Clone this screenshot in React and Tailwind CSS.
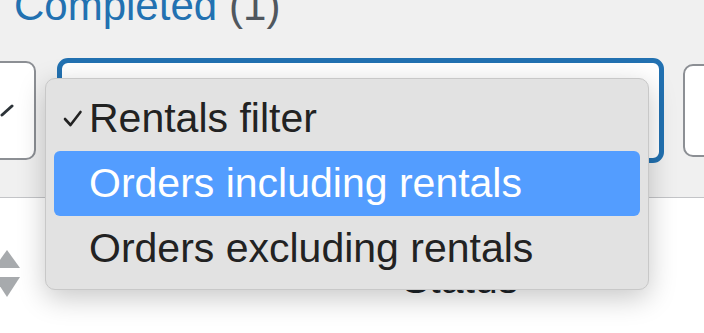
import React from 'react';

const options = [
  { label: 'Rentals filter', checked: true },
  { label: 'Orders including rentals', active: true },
  { label: 'Orders excluding rentals' },
];

function SortArrows() {
  return (
    <svg width="28" height="48" viewBox="0 0 28 48" className="shrink-0">
      <polygon points="13,0 26,18 0,18" fill="#a7aaad" />
      <polygon points="0,27 26,27 13,47" fill="#a7aaad" />
    </svg>
  );
}

function Check() {
  return (
    <svg width="20" height="18" viewBox="0 0 20 18" className="shrink-0">
      <polyline points="2,9 7.5,15 17.5,2" fill="none" stroke="#222" strokeWidth="2.6" strokeLinecap="round" strokeLinejoin="round" />
    </svg>
  );
}

export default function App() {
  return (
    <div className="relative w-[704px] h-[333px] overflow-hidden bg-white font-['Liberation_Sans',Arial,sans-serif]">
      {/* Grey toolbar area */}
      <div className="flex flex-col h-[198px] bg-[#f0f0f0] border-b border-[#c3c4c7]">
        <div className="pl-[14px] -mt-[15px] text-[42px] leading-[42px] whitespace-nowrap">
          <span className="text-[#2271b1]">Completed</span>
          <span className="text-[#50575e] ml-[12px]">(1)</span>
        </div>

        <div className="mt-[31px] flex items-center">
          {/* left select, mostly cut off */}
          <div className="relative -ml-[24px] w-[60px] h-[99px] bg-white border-2 border-[#8c8f94] rounded-[10px] shrink-0">
            <svg width="14" height="14" viewBox="0 0 14 14" className="absolute left-[22px] top-[40px]">
              <polyline points="2,12 12,3" fill="none" stroke="#2c3338" strokeWidth="3" strokeLinecap="round" />
            </svg>
          </div>
          {/* focused select */}
          <div className="ml-[21px] w-[607px] h-[105px] bg-white border-[5px] border-[#2271b1] rounded-[11px] shrink-0" />
          {/* right select */}
          <div className="ml-[19px] w-[60px] h-[93px] bg-white border-2 border-[#8c8f94] rounded-[10px] shrink-0" />
        </div>
      </div>

      {/* Table header row */}
      <div className="flex items-start">
        <div className="-ml-[6px] mt-[52px]">
          <SortArrows />
        </div>
        <div className="ml-[380px] mt-[61px] text-[41px] leading-[41px] text-[#1d2327]">Status</div>
      </div>

      {/* Native dropdown menu */}
      <div className="absolute left-[45px] top-[78px] w-[604px] h-[212px] bg-[#e2e2e2] border border-[#c8c8c8] rounded-[10px] shadow-[0_8px_28px_rgba(0,0,0,0.22)] pt-[7px] px-[8px]">
        {options.map((o) => (
          <div
            key={o.label}
            className={`flex items-center h-[65px] rounded-[6px] pl-[9px] text-[41px] whitespace-nowrap ${
              o.active ? 'bg-[#539dff] text-white' : 'text-[#222222]'
            }`}
          >
            <div className="w-[26px] flex items-center">{o.checked && <Check />}</div>
            <span>{o.label}</span>
          </div>
        ))}
      </div>
    </div>
  );
}
